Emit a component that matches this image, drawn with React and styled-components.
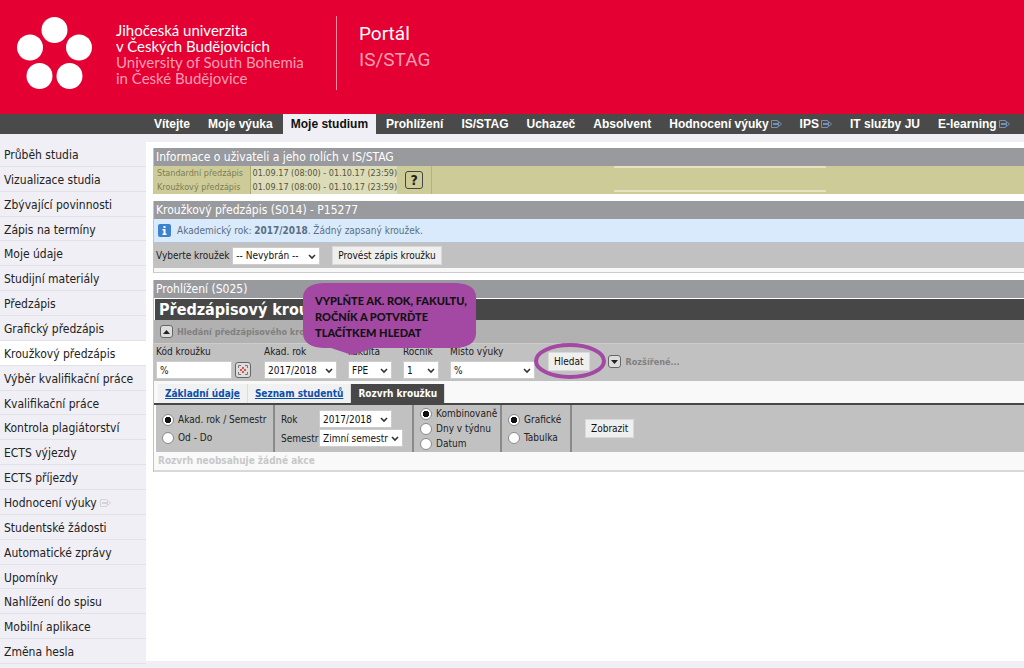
import React from 'react';
import styled, { createGlobalStyle } from 'styled-components';

const GlobalStyle = createGlobalStyle`
  * {
    box-sizing: border-box;
  }

  body {
    margin: 0;
    background: #f0eff5;
    color: #222;
    font-family: "DejaVu Sans Condensed", "DejaVu Sans", sans-serif;
    font-size: 10px;
  }

  button, input, select {
    font: inherit;
    color: inherit;
  }
`;

const Page = styled.div`
  display: flex;
  flex-direction: column;
  min-height: 100vh;
  overflow-x: hidden;
`;

const Header = styled.header`
  display: flex;
  align-items: flex-start;
  height: 114px;
  padding: 16px 16px 0;
  background: #e40033;
  color: #fff;
`;

const UniversityName = styled.div`
  width: 220px;
  margin-left: 23px;
  padding-top: 6px;
  font-family: Lato, sans-serif;
  font-size: 15px;
  line-height: 16px;
  white-space: nowrap;
`;

const Faded = styled.span`
  color: #ff9db0;
`;

const PortalName = styled.div`
  height: 74px;
  padding: 5px 0 0 22px;
  border-left: 1px solid #ff8ea3;
  font-family: Roboto, sans-serif;
  font-size: 19px;
  line-height: 26px;
`;

const MainNav = styled.nav`
  display: flex;
  gap: 2px;
  height: 20px;
  padding-left: 146px;
  background: #4a4a4a;
`;

const NavLink = styled.a`
  display: flex;
  flex: none;
  align-items: center;
  gap: 2px;
  padding: 0 8px;
  background: ${({ $active }) => ($active ? '#f0eff5' : 'transparent')};
  color: ${({ $active }) => ($active ? '#111' : '#fff')};
  font-family: "Liberation Sans", Arial, sans-serif;
  font-size: 12px;
  font-weight: bold;
  text-decoration: none;
  white-space: nowrap;
`;

const Columns = styled.div`
  display: flex;
  flex: 1;
  padding: 8px 0 4px;
`;

const SideNav = styled.nav`
  display: flex;
  flex: none;
  flex-direction: column;
  width: 146px;
`;

const SideLink = styled.a`
  display: flex;
  flex: 1;
  align-items: center;
  gap: 3px;
  padding: 2px 0 0 4px;
  border-bottom: 1px solid #e2e1e8;
  background: ${({ $active }) => ($active ? '#fff' : 'transparent')};
  color: #222;
  font-size: 12px;
  line-height: 16px;
  text-decoration: none;
`;

const Content = styled.main`
  display: flex;
  flex: 1;
  flex-direction: column;
  gap: 7px;
  min-width: 0;
  margin-bottom: 3px;
  padding: 6px 0 0 7px;
  background: #fff;
`;

const Panel = styled.section`
  border-left: 1px solid #c4c4c4;
`;

const PanelTitle = styled.h2`
  margin: 0;
  padding-left: 2px;
  background: #999a9e;
  color: #fff;
  font-size: 12px;
  font-weight: normal;
  line-height: 18px;
`;

const Deadlines = styled.div`
  display: flex;
  height: 28px;
  background: #cdcc99;
`;

const DeadlineTable = styled.table`
  border-collapse: collapse;
  font-size: 9px;
  line-height: 13px;
  white-space: nowrap;

  th {
    width: 96px;
    padding: 0 0 0 3px;
    border-right: 1px solid #aaa970;
    color: #7d7c55;
    font-weight: normal;
    text-align: left;
  }

  td {
    width: 147px;
    padding: 0 0 0 2px;
    background: #dddcb8;
    color: #55543c;
  }
`;

const HelpCell = styled.div`
  display: flex;
  align-items: center;
  padding: 0 8px;
  border-right: 1px solid #b3b280;
`;

const HelpButton = styled.button`
  width: 18px;
  height: 18px;
  padding: 0;
  border: 1px solid #444;
  border-radius: 3px;
  background: #cdcc99;
  color: #222;
  font-size: 14px;
  font-weight: bold;
  line-height: 16px;
`;

const BlankField = styled.div`
  width: 212px;
  height: 26px;
  margin-left: 182px;
  border: solid #e6e2bd;
  border-width: 2px 0;
`;

const Notice = styled.p`
  display: flex;
  align-items: center;
  gap: 6px;
  height: 24px;
  margin: 0;
  padding-left: 4px;
  border-bottom: 1px solid #b9c4d0;
  background: #d8eafb;
  color: #5b6f86;
`;

const FormBar = styled.form`
  display: flex;
  align-items: center;
  height: 25px;
  padding-left: 2px;
  background: #c1c1c1;
`;

const PanelEnd = styled.div`
  height: 5px;
  border-bottom: 1px solid #ccc;
  background: #f7f7f7;
`;

const Button = styled.button`
  height: 19px;
  margin-left: ${({ $gap }) => $gap || 0}px;
  padding: 0 5px;
  border: 1px solid #d9d9d9;
  background: #efefef;
  color: #111;
  white-space: nowrap;
`;

const SelectWrap = styled.span`
  position: relative;
  display: inline-flex;
  width: ${({ $width }) => $width}px;

  svg {
    position: absolute;
    top: 7px;
    right: 4px;
    pointer-events: none;
  }
`;

const NativeSelect = styled.select`
  width: 100%;
  height: 18px;
  padding: 0 0 0 3px;
  border: 1px solid #ccc;
  border-radius: 0;
  background: #fff;
  color: #111;
  appearance: none;
`;

const Heading = styled.h1`
  margin: 1px 0 0 1px;
  padding-left: 4px;
  background: #474747;
  color: #fff;
  font-size: 16px;
  line-height: 21px;
`;

const SearchTitle = styled.div`
  display: flex;
  align-items: center;
  gap: 4px;
  height: 23px;
  padding-left: 6px;
  background: #b1b1b1;
  color: #808080;
  font-size: 9px;
  font-weight: bold;
`;

const SearchForm = styled.form`
  display: flex;
  align-items: flex-end;
  height: 38px;
  padding: 0 0 2px 2px;
  border-top: 1px solid #ccc;
  background: #c1c1c1;
`;

const Field = styled.div`
  display: flex;
  flex-direction: column;
  gap: 2px;
  margin-right: ${({ $after }) => $after}px;

  label {
    line-height: 14px;
    white-space: nowrap;
  }
`;

const FieldRow = styled.div`
  display: flex;
  align-items: center;
  gap: 3px;
`;

const TextInput = styled.input`
  width: 76px;
  height: 18px;
  padding: 0 3px;
  border: 1px solid #ccc;
  background: #fff;
`;

const SmallButton = styled.button`
  display: flex;
  align-items: center;
  justify-content: center;
  width: ${({ $size }) => $size}px;
  height: ${({ $size }) => $size}px;
  padding: 0;
  border: 1px solid #666;
  border-radius: 3px;
  background: #ddd;
`;

const Submit = styled.div`
  position: relative;
  align-self: center;
`;

const Ring = styled.svg`
  position: absolute;
  top: -9px;
  left: -14px;
  pointer-events: none;
`;

const Extended = styled.div`
  display: flex;
  align-self: center;
  align-items: center;
  gap: 5px;
  margin-left: 18px;
  color: #808080;
  font-size: 9px;
  font-weight: bold;
`;

const Tabs = styled.div`
  display: flex;
  height: 24px;
  padding: 3px 0 0 4px;
  border-bottom: 2px solid #474747;
  background: #f9f9f9;
`;

const Tab = styled.a`
  padding: 0 7px;
  border-right: 1px solid #ddd;
  background: ${({ $active }) => ($active ? '#474747' : '#f1f1f1')};
  color: ${({ $active }) => ($active ? '#fff' : '#0b4fae')};
  font-weight: bold;
  line-height: 19px;
  text-decoration: ${({ $active }) => ($active ? 'none' : 'underline')};
  white-space: nowrap;
`;

const Options = styled.form`
  display: flex;
  align-items: stretch;
  height: 47px;
  margin-left: 2px;
  background: #c1c1c1;
`;

const OptionGroup = styled.fieldset`
  display: flex;
  flex-direction: column;
  justify-content: center;
  gap: ${({ $gap }) => $gap}px;
  min-width: 0;
  width: ${({ $width }) => $width}px;
  margin: 0;
  padding: 0 0 0 6px;
  border: 0;
  border-right: 2px solid #8a8a8a;
`;

const Choice = styled.label`
  display: flex;
  align-items: center;
  gap: 4px;
  line-height: 13px;
  white-space: nowrap;
`;

const Radio = styled.input`
  flex: none;
  width: 12px;
  height: 12px;
  margin: 0;
  border: 1px solid #8a8a8a;
  border-radius: 50%;
  background: #fff;
  appearance: none;

  &:checked {
    background: radial-gradient(circle, #111 0 3px, #fff 3px);
  }
`;

const PeriodRow = styled.div`
  display: grid;
  grid-template-columns: 38px auto;
  align-items: center;
`;

const Empty = styled.p`
  margin: 0;
  padding-left: 4px;
  border-bottom: 2px solid #d8d8d8;
  background: #f9f9f9;
  color: #c8c8c8;
  font-weight: bold;
  line-height: 18px;
`;

const Lookup = styled.div`
  position: relative;
`;

const Callout = styled.div`
  position: absolute;
  top: 3px;
  left: 149px;
  width: 173px;
  height: 72px;
  padding: 10px 0 0 12px;
  color: #111;
  font-family: Lato, sans-serif;
  font-size: 11px;
  font-weight: 900;
  line-height: 16px;
  white-space: nowrap;

  svg {
    position: absolute;
    top: 0;
    left: 0;
  }

  span {
    position: relative;
  }
`;

const menu = [
  { label: 'Vítejte' },
  { label: 'Moje výuka' },
  { label: 'Moje studium', active: true },
  { label: 'Prohlížení' },
  { label: 'IS/STAG' },
  { label: 'Uchazeč' },
  { label: 'Absolvent' },
  { label: 'Hodnocení výuky', external: true },
  { label: 'IPS', external: true },
  { label: 'IT služby JU' },
  { label: 'E-learning', external: true },
];

const sideMenu = [
  { label: 'Průběh studia' },
  { label: 'Vizualizace studia' },
  { label: 'Zbývající povinnosti' },
  { label: 'Zápis na termíny' },
  { label: 'Moje údaje' },
  { label: 'Studijní materiály' },
  { label: 'Předzápis' },
  { label: 'Grafický předzápis' },
  { label: 'Kroužkový předzápis', active: true },
  { label: 'Výběr kvalifikační práce' },
  { label: 'Kvalifikační práce' },
  { label: 'Kontrola plagiátorství' },
  { label: 'ECTS výjezdy' },
  { label: 'ECTS příjezdy' },
  { label: 'Hodnocení výuky', external: true },
  { label: 'Studentské žádosti' },
  { label: 'Automatické zprávy' },
  { label: 'Upomínky' },
  { label: 'Nahlížení do spisu' },
  { label: 'Mobilní aplikace' },
  { label: 'Změna hesla' },
];

function ExternalIcon({ color }) {
  return (
    <svg width="11" height="8" viewBox="0 0 11 8" fill="none" stroke={color} aria-hidden="true">
      <path d="M6.500 1.500V.5H.5v7h6v-1" />
      <path d="M2.500 3.500h5M2.500 4.500h5M2.500 3v2" />
      <path d="M7.500 1.500v5L10.500 4z" />
    </svg>
  );
}

function Select({ id, width, value }) {
  return (
    <SelectWrap $width={width}>
      <NativeSelect id={id} defaultValue={value}>
        <option>{value}</option>
      </NativeSelect>
      <svg width="8" height="6" viewBox="0 0 8 6" fill="none" stroke="#333" strokeWidth="1.6" aria-hidden="true">
        <path d="M1 1l3 3 3-3" />
      </svg>
    </SelectWrap>
  );
}

function RadioChoice({ name, label, checked }) {
  return (
    <Choice>
      <Radio type="radio" name={name} defaultChecked={checked} />
      {label}
    </Choice>
  );
}

function App() {
  return (
    <Page>
      <GlobalStyle />
      <Header>
        <svg width="77" height="76" viewBox="0 0 77 76" fill="#fff" aria-hidden="true">
          <circle cx="38.500" cy="14" r="13" />
          <circle cx="14" cy="31.500" r="13" />
          <circle cx="63" cy="31.500" r="13" />
          <circle cx="23.500" cy="60" r="13" />
          <circle cx="53.500" cy="60" r="13" />
        </svg>
        <UniversityName>
          Jihočeská univerzita<br />
          v Českých Budějovicích<br />
          <Faded>
            University of South Bohemia<br />
            in České Budějovice
          </Faded>
        </UniversityName>
        <PortalName>
          Portál<br />
          <Faded>IS/STAG</Faded>
        </PortalName>
      </Header>

      <MainNav>
        {menu.map((item) => (
          <NavLink key={item.label} href="#" $active={item.active}>
            {item.label}
            {item.external && <ExternalIcon color="#7390b5" />}
          </NavLink>
        ))}
      </MainNav>

      <Columns>
        <SideNav>
          {sideMenu.map((item) => (
            <SideLink key={item.label} href="#" $active={item.active}>
              {item.label}
              {item.external && <ExternalIcon color="#d3d3d8" />}
            </SideLink>
          ))}
        </SideNav>

        <Content>
          <Panel>
            <PanelTitle>Informace o uživateli a jeho rolích v IS/STAG</PanelTitle>
            <Deadlines>
              <DeadlineTable>
                <tbody>
                  <tr>
                    <th scope="row">Standardní předzápis</th>
                    <td>01.09.17 (08:00) - 01.10.17 (23:59)</td>
                  </tr>
                  <tr>
                    <th scope="row">Kroužkový předzápis</th>
                    <td>01.09.17 (08:00) - 01.10.17 (23:59)</td>
                  </tr>
                </tbody>
              </DeadlineTable>
              <HelpCell>
                <HelpButton type="button">?</HelpButton>
              </HelpCell>
              <BlankField />
            </Deadlines>
          </Panel>

          <Panel>
            <PanelTitle>Kroužkový předzápis (S014) - P15277</PanelTitle>
            <Notice>
              <svg width="13" height="13" viewBox="0 0 13 13" aria-hidden="true">
                <rect width="13" height="13" rx="2" fill="#3d82cf" />
                <path d="M5.500 2h2v2h-2zM4.500 5h3v4.500h1V11h-4V9.500h1v-3h-1z" fill="#fff" />
              </svg>
              <span>Akademický rok: <b>2017/2018</b>. Žádný zapsaný kroužek.</span>
            </Notice>
            <FormBar onSubmit={(e) => e.preventDefault()}>
              <label htmlFor="group">Vyberte kroužek&nbsp;</label>
              <Select id="group" width={88} value="-- Nevybrán --" />
              <Button $gap={12}>Provést zápis kroužku</Button>
            </FormBar>
            <PanelEnd />
          </Panel>

          <Panel>
            <Lookup>
              <PanelTitle>Prohlížení (S025)</PanelTitle>
              <Heading>Předzápisový kroužek</Heading>
              <SearchTitle>
                <SmallButton type="button" $size={13} aria-label="Sbalit">
                  <svg width="7" height="4" viewBox="0 0 7 4" aria-hidden="true"><path d="M0 4h7L3.500 0z" fill="#222" /></svg>
                </SmallButton>
                Hledání předzápisového kroužku
              </SearchTitle>
              <SearchForm onSubmit={(e) => e.preventDefault()}>
                <Field $after={13}>
                  <label htmlFor="code">Kód kroužku</label>
                  <FieldRow>
                    <TextInput id="code" defaultValue="%" />
                    <SmallButton type="button" $size={16} aria-label="Vybrat">
                      <svg width="12" height="12" viewBox="0 0 12 12" fill="none" stroke="#777" aria-hidden="true">
                        <path d="M1.500 4V1.500H4M8 1.500h2.500V4M10.500 8v2.500H8M4 10.500H1.500V8" />
                        <path d="M6 3v2M6 7v2M3 6h2M7 6h2" stroke="#d22" strokeWidth="1.500" />
                      </svg>
                    </SmallButton>
                  </FieldRow>
                </Field>
                <Field $after={11}>
                  <label htmlFor="year">Akad. rok</label>
                  <Select id="year" width={73} value="2017/2018" />
                </Field>
                <Field $after={11}>
                  <label htmlFor="faculty">Fakulta</label>
                  <Select id="faculty" width={44} value="FPE" />
                </Field>
                <Field $after={11}>
                  <label htmlFor="grade">Ročník</label>
                  <Select id="grade" width={36} value="1" />
                </Field>
                <Field $after={13}>
                  <label htmlFor="place">Místo výuky</label>
                  <Select id="place" width={85} value="%" />
                </Field>
                <Submit>
                  <Button>Hledat</Button>
                  <Ring width="72" height="36" viewBox="0 0 72 36" fill="none" stroke="#a349a4" strokeWidth="4" aria-hidden="true">
                    <ellipse cx="36" cy="18" rx="34" ry="16" />
                  </Ring>
                </Submit>
                <Extended>
                  <SmallButton type="button" $size={13} aria-label="Rozbalit">
                    <svg width="7" height="4" viewBox="0 0 7 4" aria-hidden="true"><path d="M0 0h7L3.500 4z" fill="#222" /></svg>
                  </SmallButton>
                  Rozšířené...
                </Extended>
              </SearchForm>
              <Callout>
                <svg width="173" height="72" viewBox="0 0 173 72" fill="#a349a4" aria-hidden="true">
                  <path d="M20 0H153Q173 1 173 14V51Q172 64 153 65H71L49 72 28 65H20Q1 64 0 51V14Q1 1 20 0z" />
                </svg>
                <span>
                  VYPLŇTE AK. ROK, FAKULTU,<br />
                  ROČNÍK A POTVRĎTE<br />
                  TLAČÍTKEM HLEDAT
                </span>
              </Callout>
            </Lookup>

            <Tabs>
              <Tab href="#">Základní údaje</Tab>
              <Tab href="#">Seznam studentů</Tab>
              <Tab href="#" $active>Rozvrh kroužku</Tab>
            </Tabs>
            <Options onSubmit={(e) => e.preventDefault()}>
              <OptionGroup $width={119} $gap={5}>
                <RadioChoice name="range" label="Akad. rok / Semestr" checked />
                <RadioChoice name="range" label="Od - Do" />
              </OptionGroup>
              <OptionGroup $width={139} $gap={1}>
                <PeriodRow>
                  <label htmlFor="optYear">Rok</label>
                  <Select id="optYear" width={73} value="2017/2018" />
                </PeriodRow>
                <PeriodRow>
                  <label htmlFor="semester">Semestr</label>
                  <Select id="semester" width={84} value="Zimní semestr" />
                </PeriodRow>
              </OptionGroup>
              <OptionGroup $width={88} $gap={2}>
                <RadioChoice name="view" label="Kombinovaně" checked />
                <RadioChoice name="view" label="Dny v týdnu" />
                <RadioChoice name="view" label="Datum" />
              </OptionGroup>
              <OptionGroup $width={70} $gap={5}>
                <RadioChoice name="format" label="Grafické" checked />
                <RadioChoice name="format" label="Tabulka" />
              </OptionGroup>
              <FieldRow>
                <Button $gap={13}>Zobrazit</Button>
              </FieldRow>
            </Options>
            <Empty>Rozvrh neobsahuje žádné akce</Empty>
          </Panel>
        </Content>
      </Columns>
    </Page>
  );
}

export default App;
